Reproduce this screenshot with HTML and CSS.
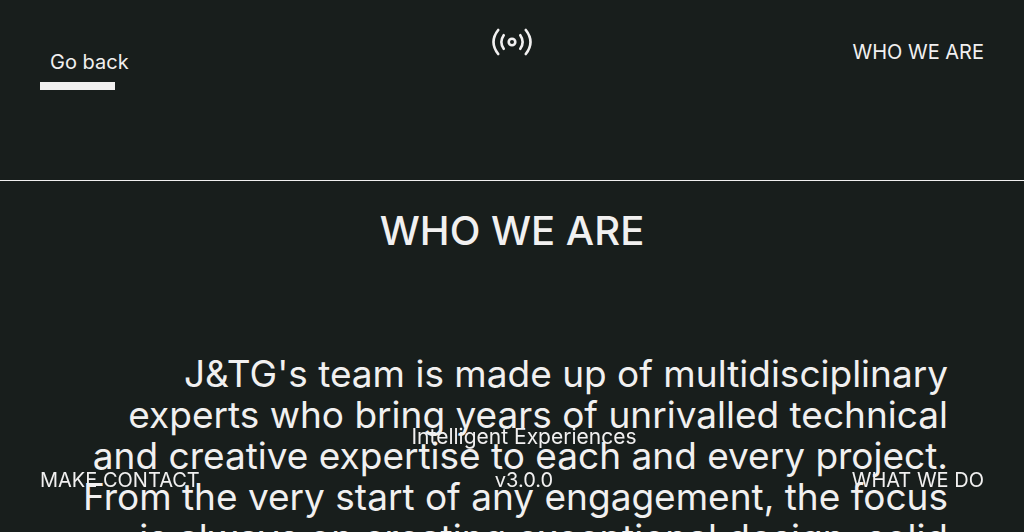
FILE: index.html
```html
<!DOCTYPE html>
<html lang="en">
<head>
<meta charset="utf-8">
<meta name="viewport" content="width=device-width, initial-scale=1">
<title>Who we are</title>
<link rel="stylesheet" href="styles.css">
</head>
<body>
<header class="topbar">
  <button class="back" type="button"><span class="back-label">Go back</span><span class="back-bar"></span></button>
  <a class="logo" href="#" aria-label="Home">
    <svg width="40" height="28" viewBox="0 0 40 28" fill="none" stroke="currentColor" stroke-width="2.6" stroke-linecap="round">
      <circle cx="20" cy="14" r="3.3"/>
      <path d="M11.7 7.2Q7 14 11.7 20.8M28.3 7.2Q33 14 28.3 20.8M6.2 2Q-3.2 14 6.2 26M33.8 2Q43.2 14 33.8 26"/>
    </svg>
  </a>
  <a class="link current" href="#">WHO WE ARE</a>
</header>
<main class="page">
  <h1 class="title">WHO WE ARE</h1>
  <p class="intro">J&amp;TG's team is made up of multidisciplinary<br>experts who bring years of unrivalled technical<br>and creative expertise to each and every project.<br>From the very start of any engagement, the focus<br>is always on creating exceptional design, solid</p>
</main>
<footer class="bottombar">
  <a class="link" href="#">MAKE CONTACT</a>
  <div class="tagline"><span class="motto">Intelligent Experiences</span><span>v3.0.0</span></div>
  <a class="link next" href="#">WHAT WE DO</a>
</footer>
</body>
</html>
```
FILE: styles.css
```css
* { box-sizing: border-box; }
html, body { height: 100%; }
body {
  margin: 0;
  overflow: hidden;
  background: #181e1c;
  color: #f1f0f0;
  font: 20px/24px Inter, "Open Sans", sans-serif;
}
.topbar {
  display: grid;
  grid-template-columns: 1fr auto 1fr;
  align-items: start;
  height: 181px;
  padding: 28px 40px 0;
  border-bottom: 1px solid #f1f0f0;
}
.back {
  display: grid;
  gap: 8px;
  justify-self: start;
  justify-items: start;
  padding: 22px 0 0;
  border: 0;
  background: none;
  color: inherit;
  font: inherit;
}
.back-label { padding-left: 10px; }
.back-bar { width: 75px; height: 8px; background: #f1f0f0; }
.logo { color: inherit; }
.logo svg { display: block; }
.link { color: inherit; text-decoration: none; }
.current { justify-self: end; padding-top: 12px; }
.title {
  margin: 0;
  padding-top: 26px;
  font-size: 40px;
  line-height: 48px;
  font-weight: 500;
  text-align: center;
}
.intro {
  margin: 0;
  padding: 98px 76px 0;
  font-size: 37px;
  line-height: 41px;
  text-align: right;
  white-space: nowrap;
}
.bottombar {
  position: fixed;
  inset: auto 0 0;
  display: grid;
  grid-template-columns: 1fr auto 1fr;
  align-items: end;
  padding: 0 40px 40px;
}
.tagline {
  display: grid;
  gap: 19px;
  padding-left: 24px;
  text-align: center;
}
.motto { font-size: 21px; }
.next { justify-self: end; }
```
